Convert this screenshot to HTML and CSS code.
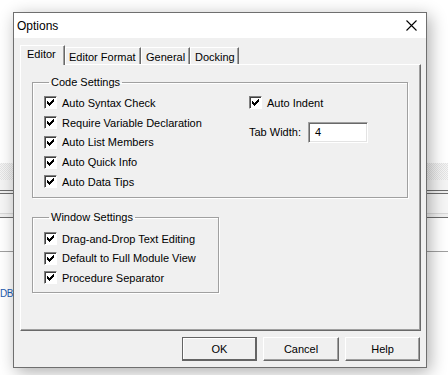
FILE: index.html
```html
<!DOCTYPE html>
<html lang="en">
<head>
    <meta charset="UTF-8">
    <meta name="viewport" content="width=device-width, initial-scale=1.0">
    <title>Options</title>
    <link rel="stylesheet" href="styles.css">
</head>
<body>
    <!-- the editor window behind the dialog -->
    <div class="desktop">
        <div class="band top"></div>
        <div class="band checker"></div>
        <div class="band pale"></div>
        <div class="rule dark"></div>
        <div class="band gap2"></div>
        <div class="rule dark"></div>
        <div class="band light"></div>
        <div class="rule soft"></div>
        <div class="band gap3"></div>
        <div class="rule dark"></div>
        <div class="band white"></div>
        <div class="rule mid"></div>
        <div class="band rest"><span class="db">DB</span></div>
    </div>

    <div class="dialog">
        <div class="titlebar">
            <span class="title">Options</span>
            <svg class="close" width="11" height="11" viewBox="0 0 11 11">
                <path d="M0.5 0.5L10.5 10.5M10.5 0.5L0.5 10.5" stroke="#000" stroke-width="1.1" fill="none"/>
            </svg>
        </div>

        <div class="dialog-body">
            <div class="tabs">
                <span class="tab active">Editor</span>
                <span class="tab format">Editor Format</span>
                <span class="tab general">General</span>
                <span class="tab docking">Docking</span>
            </div>

            <div class="panel">
                <fieldset class="group code">
                    <legend>Code Settings</legend>
                    <div class="group-cols">
                        <div class="col">
                            <label class="check"><span class="box"><svg width="11" height="11" viewBox="0 0 11 11"><path d="M2 4h1v3H2zM3 5h1v3H3zM4 6h1v3H4zM5 5h1v3H5zM6 4h1v3H6zM7 3h1v3H7zM8 2h1v3H8z" fill="#000"/></svg></span>Auto Syntax Check</label>
                            <label class="check"><span class="box"><svg width="11" height="11" viewBox="0 0 11 11"><path d="M2 4h1v3H2zM3 5h1v3H3zM4 6h1v3H4zM5 5h1v3H5zM6 4h1v3H6zM7 3h1v3H7zM8 2h1v3H8z" fill="#000"/></svg></span>Require Variable Declaration</label>
                            <label class="check"><span class="box"><svg width="11" height="11" viewBox="0 0 11 11"><path d="M2 4h1v3H2zM3 5h1v3H3zM4 6h1v3H4zM5 5h1v3H5zM6 4h1v3H6zM7 3h1v3H7zM8 2h1v3H8z" fill="#000"/></svg></span>Auto List Members</label>
                            <label class="check"><span class="box"><svg width="11" height="11" viewBox="0 0 11 11"><path d="M2 4h1v3H2zM3 5h1v3H3zM4 6h1v3H4zM5 5h1v3H5zM6 4h1v3H6zM7 3h1v3H7zM8 2h1v3H8z" fill="#000"/></svg></span>Auto Quick Info</label>
                            <label class="check"><span class="box"><svg width="11" height="11" viewBox="0 0 11 11"><path d="M2 4h1v3H2zM3 5h1v3H3zM4 6h1v3H4zM5 5h1v3H5zM6 4h1v3H6zM7 3h1v3H7zM8 2h1v3H8z" fill="#000"/></svg></span>Auto Data Tips</label>
                        </div>
                        <div class="col">
                            <label class="check"><span class="box"><svg width="11" height="11" viewBox="0 0 11 11"><path d="M2 4h1v3H2zM3 5h1v3H3zM4 6h1v3H4zM5 5h1v3H5zM6 4h1v3H6zM7 3h1v3H7zM8 2h1v3H8z" fill="#000"/></svg></span>Auto Indent</label>
                            <div class="field">
                                <span>Tab Width:</span>
                                <span class="textbox">4</span>
                            </div>
                        </div>
                    </div>
                </fieldset>

                <fieldset class="group window">
                    <legend>Window Settings</legend>
                    <label class="check"><span class="box"><svg width="11" height="11" viewBox="0 0 11 11"><path d="M2 4h1v3H2zM3 5h1v3H3zM4 6h1v3H4zM5 5h1v3H5zM6 4h1v3H6zM7 3h1v3H7zM8 2h1v3H8z" fill="#000"/></svg></span>Drag-and-Drop Text Editing</label>
                    <label class="check"><span class="box"><svg width="11" height="11" viewBox="0 0 11 11"><path d="M2 4h1v3H2zM3 5h1v3H3zM4 6h1v3H4zM5 5h1v3H5zM6 4h1v3H6zM7 3h1v3H7zM8 2h1v3H8z" fill="#000"/></svg></span>Default to Full Module View</label>
                    <label class="check"><span class="box"><svg width="11" height="11" viewBox="0 0 11 11"><path d="M2 4h1v3H2zM3 5h1v3H3zM4 6h1v3H4zM5 5h1v3H5zM6 4h1v3H6zM7 3h1v3H7zM8 2h1v3H8z" fill="#000"/></svg></span>Procedure Separator</label>
                </fieldset>
            </div>

            <div class="buttons">
                <button class="default">OK</button>
                <button class="wide">Cancel</button>
                <button>Help</button>
            </div>
        </div>
    </div>
</body>
</html>
```

FILE: styles.css
```css
body {
    margin: 0;
    background-color: #fff;
    font-family: "Liberation Sans", Arial, sans-serif;
    font-size: 11px;
    color: #000;
    width: 448px;
    height: 375px;
    overflow: hidden;
}

/* background window */
.desktop {
    width: 448px;
}
.band {
    background-color: #fff;
}
.band.top {
    height: 163px;
}
.band.checker {
    height: 17px;
    background-color: #f0f0f0;
    background-image: repeating-conic-gradient(#e4e4e4 0 25%, #f6f6f6 0 50%);
    background-size: 2px 2px;
}
.band.pale {
    height: 10px;
    background-color: #f4f4f4;
}
.band.gap2 {
    height: 2px;
    background-color: #f0f0f0;
}
.band.light {
    height: 19px;
    background-color: #f6f6f6;
}
.band.gap3 {
    height: 3px;
    background-color: #f0f0f0;
}
.band.white {
    height: 33px;
}
.band.rest {
    height: 123px;
    padding-top: 35px;
    box-sizing: border-box;
}
.rule {
    height: 1px;
}
.rule.dark {
    background-color: #6d6d6d;
}
.rule.soft {
    background-color: #d9d9d9;
}
.rule.mid {
    background-color: #a0a0a0;
}
.db {
    display: inline-block;
    color: #1d5bb0;
    font-size: 10px;
    letter-spacing: -0.5px;
}

/* dialog */
.dialog {
    position: absolute;
    left: 13px;
    top: 12px;
    width: 412px;
    height: 354px;
    border: 1px solid #6f6f6f;
    background-color: #f0f0f0;
    box-shadow: 3px 4px 16px rgba(0, 0, 0, 0.32);
    display: flex;
    flex-direction: column;
}
.titlebar {
    height: 25px;
    background-color: #fff;
    display: flex;
    align-items: center;
    justify-content: space-between;
    padding: 0 9px 0 3px;
}
.title {
    font-size: 12px;
}
.dialog-body {
    flex: 1;
    padding: 7px 5px 6px 6px;
    display: flex;
    flex-direction: column;
}

/* tabs */
.tabs {
    height: 19px;
    display: flex;
    align-items: flex-end;
}
.tab {
    height: 17px;
    box-sizing: border-box;
    padding: 2px 0 0 3px;
    line-height: 14px;
    white-space: nowrap;
    border: 1px solid;
    border-color: #fff #696969 transparent #fff;
    border-bottom: none;
    box-shadow: inset -1px 0 0 #a0a0a0;
}
.tab.format {
    width: 76px;
}
.tab.general {
    width: 49px;
    padding-left: 4px;
}
.tab.docking {
    width: 49px;
    padding-left: 4px;
}
.tab.active {
    width: 45px;
    height: 20px;
    margin-bottom: -1px;
    padding: 1px 0 0 6px;
    position: relative;
    z-index: 1;
    background-color: #f0f0f0;
}

.panel {
    height: 267px;
    box-sizing: border-box;
    border: 1px solid;
    border-color: #fff #696969 #696969 #fff;
    box-shadow: inset -1px -1px 0 #a0a0a0;
    padding: 11px 12px 0 11px;
}

/* group boxes */
.group {
    margin: 0;
    border: 1px solid #a0a0a0;
    box-shadow: 1px 1px 0 #fff, inset 1px 1px 0 #fff;
    padding: 4px 11px 5px 11px;
    min-width: 0;
}
.group legend {
    padding: 0 2px;
    margin-left: 5px;
    line-height: 13px;
}
.group.window {
    width: 187px;
    box-sizing: border-box;
    margin-top: 13px;
    padding-top: 5px;
}
.group-cols {
    display: grid;
    grid-template-columns: 205px 1fr;
}
.code .check {
    height: 19.75px;
}
.check {
    height: 19.5px;
    display: flex;
    align-items: center;
    gap: 5px;
}
.box {
    width: 13px;
    height: 13px;
    box-sizing: border-box;
    border: 1px solid;
    border-color: #808080 #fff #fff #808080;
    background-color: #fff;
    box-shadow: inset 1px 1px 0 #404040;
    display: flex;
}
.field {
    margin-top: 9px;
    display: flex;
    align-items: center;
    gap: 7px;
}
.textbox {
    width: 60px;
    height: 21px;
    box-sizing: border-box;
    border: 1px solid;
    border-color: #a0a0a0 #fff #fff #a0a0a0;
    box-shadow: inset 1px 1px 0 #696969, inset -1px -1px 0 #e3e3e3;
    background-color: #fff;
    padding-left: 6px;
    line-height: 19px;
}

/* buttons */
.buttons {
    margin-top: 6px;
    padding-right: 1px;
    display: flex;
    justify-content: flex-end;
    gap: 6px;
}
button {
    width: 75px;
    height: 24px;
    font-family: "Liberation Sans", Arial, sans-serif;
    font-size: 11px;
    color: #000;
    background-color: #f0f0f0;
    border: 1px solid;
    border-color: #fff #696969 #696969 #fff;
    box-shadow: inset -1px -1px 0 #a0a0a0;
    padding: 0;
}
button.wide {
    width: 76px;
}
button.default {
    border-color: #646464;
    box-shadow: inset -1px -1px 0 #646464, inset 1px 1px 0 #fff;
}
```
